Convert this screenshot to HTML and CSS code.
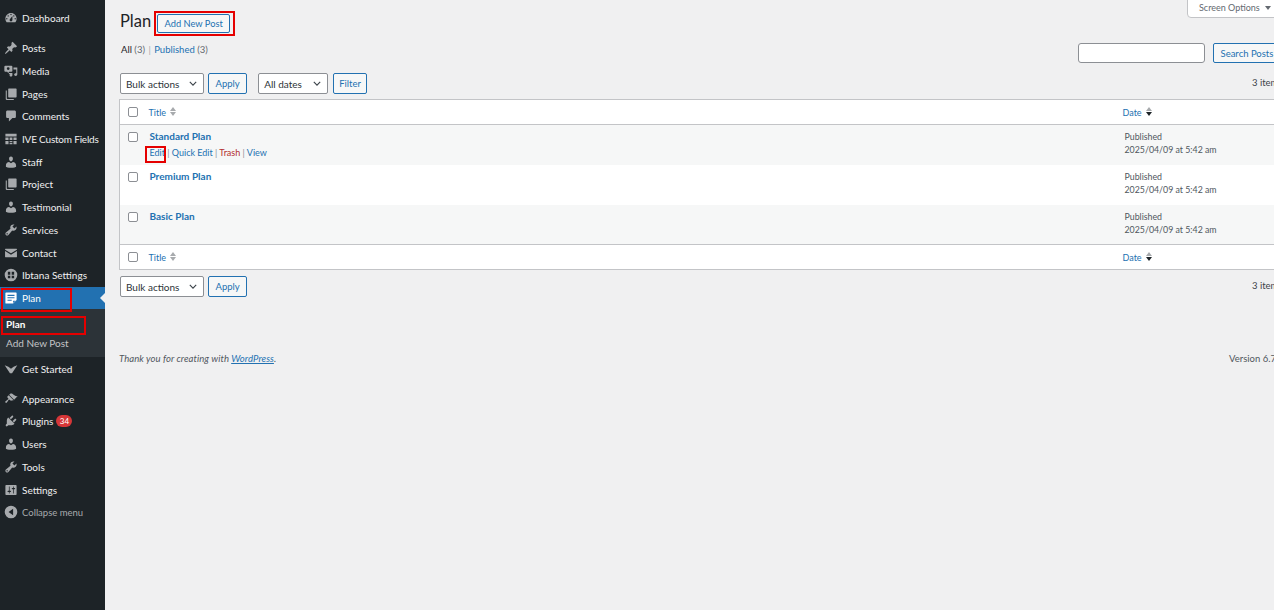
FILE: index.html
```html
<!DOCTYPE html>
<html lang="en">
<head>
  <meta charset="UTF-8">
  <title>Plan</title>
  <link rel="stylesheet" href="styles.css">
</head>
<body>
  <svg class="sprite" width="0" height="0">
    <symbol id="i-dash" viewBox="0 0 20 20"><path fill-rule="evenodd" d="M3.76 16h12.48c1.1-1.37 1.76-3.11 1.76-5 0-4.42-3.58-8-8-8s-8 3.58-8 8c0 1.89.66 3.63 1.76 5zM10 4c.55 0 1 .45 1 1s-.45 1-1 1-1-.45-1-1 .45-1 1-1zM6 6c.55 0 1 .45 1 1s-.45 1-1 1-1-.45-1-1 .45-1 1-1zm8 0c.55 0 1 .45 1 1s-.45 1-1 1-1-.45-1-1 .45-1 1-1zm-5.37 5.55L12 7v6c0 1.1-.9 2-2 2s-2-.9-2-2c0-.57.24-1.08.63-1.45zM4 10c.55 0 1 .45 1 1s-.45 1-1 1-1-.45-1-1 .45-1 1-1zm12 0c.55 0 1 .45 1 1s-.45 1-1 1-1-.45-1-1 .45-1 1-1z"/></symbol>
    <symbol id="i-pin" viewBox="0 0 20 20"><path d="M10.44 3.02l1.82-1.82 6.36 6.35-1.83 1.82c-1.05-.68-2.48-.57-3.41.36l-.75.75c-.92.93-1.04 2.35-.35 3.41l-1.83 1.82-2.41-2.41-2.8 2.79c-.42.42-3.38 2.71-3.8 2.29s1.86-3.39 2.28-3.81l2.79-2.79L4.1 9.36l1.83-1.82c1.05.69 2.48.57 3.4-.36l.75-.75c.93-.92 1.05-2.35.36-3.41z"/></symbol>
    <symbol id="i-media" viewBox="0 0 20 20"><path fill-rule="evenodd" d="M2 2.5h8.5A1.5 1.5 0 0 1 12 4v5.5a1.5 1.5 0 0 1-1.5 1.5H7.5l-1.5 2-1.5-2H2A1.5 1.5 0 0 1 .5 9.5V4A1.5 1.5 0 0 1 2 2.5zM6 4.5a2 2 0 1 0 0 4 2 2 0 0 0 0-4zM13.5 5H19v9.5c0 1.4-1 2.5-2.3 2.5s-2.2-.8-2.2-1.9 1-1.9 2.2-1.9c.3 0 .5 0 .8.1V8h-4zM7 13h5v3c0 1.2-.9 2-2.1 2S8 17.200 8 16.200c0-1 .8-1.700 2-1.700V14.500H7z"/></symbol>
    <symbol id="i-page" viewBox="0 0 20 20"><path d="M7 2h10a1 1 0 0 1 1 1v11a1 1 0 0 1-1 1H7a1 1 0 0 1-1-1V3a1 1 0 0 1 1-1zM4 5v11a1 1 0 0 0 1 1h9v1.500H4A1.500 1.500 0 0 1 2.500 17V5z"/></symbol>
    <symbol id="i-comment" viewBox="0 0 20 20"><path d="M5 2h10c1.100 0 2 .9 2 2v7c0 1.100-.9 2-2 2h-3l-5 5v-5H5c-1.100 0-2-.9-2-2V4c0-1.100.9-2 2-2z"/></symbol>
    <symbol id="i-grid" viewBox="0 0 20 20"><path fill-rule="evenodd" d="M2 2.500h16v4H2zM2 8h4.500v3.500H2zM8 8h4v3.500H8zM13.500 8H18v3.500h-4.500zM2 13h4.500v4.500H2zM8 13h4v1.800H8zM8 15.800h4v1.700H8zM13.500 13H18v4.500h-4.500z"/></symbol>
    <symbol id="i-user" viewBox="0 0 20 20"><path d="M10 9.250c-2.270 0-2.730-3.440-2.730-3.440C7 4.020 7.820 2 9.970 2c2.160 0 2.980 2.020 2.710 3.810 0 0-.41 3.440-2.680 3.440zm0 2.570L12.720 10c2.390 0 4.520 2.330 4.520 4.530v2.490s-3.650 1.130-7.240 1.130c-3.650 0-7.240-1.130-7.240-1.130v-2.490c0-2.250 1.940-4.480 4.470-4.480z"/></symbol>
    <symbol id="i-wrench" viewBox="0 0 20 20"><path fill-rule="evenodd" d="M16.680 9.770c-1.340 1.340-3.300 1.670-4.950.99l-5.410 6.520c-.99.99-2.590.99-3.580 0s-.99-2.590 0-3.570l6.520-5.420c-.68-1.650-.35-3.610.99-4.950 1.280-1.280 3.120-1.620 4.720-1.060l-2.890 2.890 2.820 2.820 2.860-2.870c.53 1.580.18 3.390-1.080 4.650zM3.810 16.210c.4.39 1.040.39 1.430 0 .4-.4.4-1.040 0-1.430-.39-.4-1.030-.4-1.430 0-.39.39-.39 1.030 0 1.430z"/></symbol>
    <symbol id="i-mail" viewBox="0 0 20 20"><path d="M2 4h16a.5.500 0 0 1 .5.500v.8L10 10.500 1.500 5.300v-.8A.5.500 0 0 1 2 4zM1.500 7.200 10 12.500l8.500-5.300v8.300a.5.500 0 0 1-.5.500H2a.5.500 0 0 1-.5-.5z"/></symbol>
    <symbol id="i-globe" viewBox="0 0 20 20"><path fill-rule="evenodd" d="M10 1a9 9 0 1 1 0 18 9 9 0 0 1 0-18zM5.500 5.500v4h3.500v-4zM11 5.500v4h3.500v-4zM5.500 11v3.500h3.500V11zM11 11v3.500h3.500V11z"/></symbol>
    <symbol id="i-plan" viewBox="0 0 20 20"><path fill-rule="evenodd" d="M3 2h14a1 1 0 0 1 1 1v10l-5 5H3a1 1 0 0 1-1-1V3a1 1 0 0 1 1-1zM5 5.500V7h10V5.500zM5 9v1.500h10V9zM5 12.500V14h6v-1.500zM13 14v3l3.500-3z"/></symbol>
    <symbol id="i-start" viewBox="0 0 20 20"><path d="M1 4.500Q7 6.500 10 9.500 13 6.500 19 4.500L11.500 16h-3z"/></symbol>
    <symbol id="i-brush" viewBox="0 0 20 20"><path d="M14.480 11.060L7.410 3.990l1.500-1.500c.5-.56 2.300-.47 3.510.32 1.210.8 1.430 1.280 2.910 2.100 1.180.64 2.450 1.260 4.230.91zm-.71.710L6.700 4.700 4.930 6.470c-.39.39-.39 1.020 0 1.410l1.060 1.060c.39.39.39 1.030 0 1.420-.6.600-1.430 1.150-2.250 1.700-1.410.96-2.800 1.890-1.640 3.060 1.170 1.170 2.100-.22 3.060-1.630.55-.82 1.100-1.650 1.700-2.250.39-.39 1.030-.39 1.420 0l1.060 1.060c.39.39 1.020.39 1.410 0z"/></symbol>
    <symbol id="i-plug" viewBox="0 0 20 20"><path d="M13.110 4.360L9.870 7.600 8 5.730l3.240-3.240c.35-.34 1.050-.2 1.560.32.52.51.66 1.210.31 1.550zm-8 1.770l.91-1.120 9.010 9.010-1.190.84c-.71.71-2.630 1.160-3.820 1.160H6.140L4.900 17.260c-.59.59-1.540.59-2.120 0-.59-.58-.59-1.530 0-2.120l1.240-1.240v-3.880c0-1.130.4-3.190 1.090-3.890zm7.260 3.970l3.240-3.240c.34-.35 1.040-.21 1.550.31.52.51.66 1.210.31 1.550l-3.240 3.250z"/></symbol>
    <symbol id="i-settings" viewBox="0 0 20 20"><path fill-rule="evenodd" d="M18 16V4c0-.55-.45-1-1-1H3c-.55 0-1 .45-1 1v12c0 .55.45 1 1 1h14c.55 0 1-.45 1-1zM8 11h1c.55 0 1 .45 1 1s-.45 1-1 1H8v1.500c0 .28-.22.5-.5.5s-.5-.22-.5-.5V13H6c-.55 0-1-.45-1-1s.45-1 1-1h1V5.500c0-.28.22-.5.5-.5s.5.22.500.500zm5-2h-1c-.55 0-1-.45-1-1s.45-1 1-1h1V5.500c0-.28.22-.5.5-.5s.5.22.5.500V7h1c.55 0 1 .45 1 1s-.45 1-1 1h-1v5.500c0 .28-.22.5-.5.5s-.5-.22-.5-.5z"/></symbol>
    <symbol id="i-collapse" viewBox="0 0 20 20"><path fill-rule="evenodd" d="M10 1a9 9 0 1 1 0 18 9 9 0 0 1 0-18zM13 5.500 6.500 10l6.500 4.500z"/></symbol>
  </svg>

  <div class="screen">
    <nav class="sidebar">
      <a class="item"><svg class="ic"><use href="#i-dash"/></svg>Dashboard</a>
      <div class="gap"></div>
      <a class="item"><svg class="ic"><use href="#i-pin"/></svg>Posts</a>
      <a class="item"><svg class="ic"><use href="#i-media"/></svg>Media</a>
      <a class="item"><svg class="ic"><use href="#i-page"/></svg>Pages</a>
      <a class="item"><svg class="ic"><use href="#i-comment"/></svg>Comments</a>
      <a class="item tight"><svg class="ic"><use href="#i-grid"/></svg>IVE Custom Fields</a>
      <a class="item"><svg class="ic"><use href="#i-user"/></svg>Staff</a>
      <a class="item"><svg class="ic"><use href="#i-page"/></svg>Project</a>
      <a class="item"><svg class="ic"><use href="#i-user"/></svg>Testimonial</a>
      <a class="item"><svg class="ic"><use href="#i-wrench"/></svg>Services</a>
      <a class="item"><svg class="ic"><use href="#i-mail"/></svg>Contact</a>
      <a class="item"><svg class="ic"><use href="#i-globe"/></svg>Ibtana Settings</a>
      <a class="item current"><svg class="ic"><use href="#i-plan"/></svg>Plan</a>
      <div class="submenu">
        <a class="sub active">Plan</a>
        <a class="sub">Add New Post</a>
      </div>
      <a class="item"><svg class="ic"><use href="#i-start"/></svg>Get Started</a>
      <div class="gap"></div>
      <a class="item"><svg class="ic"><use href="#i-brush"/></svg>Appearance</a>
      <a class="item"><svg class="ic"><use href="#i-plug"/></svg>Plugins <span class="badge">34</span></a>
      <a class="item"><svg class="ic"><use href="#i-user"/></svg>Users</a>
      <a class="item"><svg class="ic"><use href="#i-wrench"/></svg>Tools</a>
      <a class="item"><svg class="ic"><use href="#i-settings"/></svg>Settings</a>
      <a class="item collapse"><svg class="ic"><use href="#i-collapse"/></svg>Collapse menu</a>
    </nav>

    <main class="content">
      <div class="screen-options">Screen Options <span class="caret"></span></div>

      <div class="title-row">
        <h1>Plan</h1>
        <a class="btn add-new">Add New Post</a>
      </div>

      <div class="views-row">
        <div class="views"><b>All</b> <span class="count">(3)</span> <span class="sep">|</span> <a>Published</a> <span class="count">(3)</span></div>
        <div class="search">
          <input class="search-input" type="text">
          <a class="btn">Search Posts</a>
        </div>
      </div>

      <div class="tablenav nav-top">
        <div class="select w-bulk">Bulk actions<svg class="chev" viewBox="0 0 10 6"><path d="M1 1l4 4 4-4"/></svg></div>
        <a class="btn">Apply</a>
        <div class="select w-dates">All dates<svg class="chev" viewBox="0 0 10 6"><path d="M1 1l4 4 4-4"/></svg></div>
        <a class="btn btn-filter">Filter</a>
        <span class="items">3 items</span>
      </div>

      <table class="posts">
        <thead>
          <tr>
            <td class="col-check"><span class="check"></span></td>
            <td class="col-title"><a>Title</a><span class="sort"><i class="up"></i><i class="down"></i></span></td>
            <td class="col-date"><a>Date</a><span class="sort dark"><i class="up"></i><i class="down"></i></span></td>
          </tr>
        </thead>
        <tbody>
          <tr class="alt">
            <td class="col-check"><span class="check"></span></td>
            <td class="col-title">
              <a class="post-name">Standard Plan</a>
              <div class="row-actions"><a>Edit</a> | <a>Quick Edit</a> | <a class="trash">Trash</a> | <a>View</a></div>
            </td>
            <td class="col-date">Published<br>2025/04/09 at 5:42 am</td>
          </tr>
          <tr>
            <td class="col-check"><span class="check"></span></td>
            <td class="col-title"><a class="post-name">Premium Plan</a></td>
            <td class="col-date">Published<br>2025/04/09 at 5:42 am</td>
          </tr>
          <tr class="alt">
            <td class="col-check"><span class="check"></span></td>
            <td class="col-title"><a class="post-name">Basic Plan</a></td>
            <td class="col-date">Published<br>2025/04/09 at 5:42 am</td>
          </tr>
        </tbody>
        <tfoot>
          <tr>
            <td class="col-check"><span class="check"></span></td>
            <td class="col-title"><a>Title</a><span class="sort"><i class="up"></i><i class="down"></i></span></td>
            <td class="col-date"><a>Date</a><span class="sort dark"><i class="up"></i><i class="down"></i></span></td>
          </tr>
        </tfoot>
      </table>

      <div class="tablenav nav-bottom">
        <div class="select w-bulk">Bulk actions<svg class="chev" viewBox="0 0 10 6"><path d="M1 1l4 4 4-4"/></svg></div>
        <a class="btn">Apply</a>
        <span class="items">3 items</span>
      </div>

      <div class="footer">
        <em>Thank you for creating with <a>WordPress</a>.</em>
        <span class="version">Version 6.7.2</span>
      </div>
    </main>

    <!-- red annotation boxes from the tutorial screenshot -->
    <span class="mark mark-add"></span>
    <span class="mark mark-edit"></span>
    <span class="mark mark-plan"></span>
    <span class="mark mark-sub"></span>
  </div>
</body>
</html>
```

FILE: styles.css
```css
* {
  box-sizing: border-box;
}

html, body {
  margin: 0;
  height: 100%;
  overflow: hidden;
}

body {
  font-family: Lato, "Open Sans", sans-serif;
  font-size: 10px;
  color: #3c434a;
  background: #f0f0f1;
}

a {
  color: #2271b1;
}

.sprite {
  position: absolute;
}

.screen {
  position: relative;
  display: flex;
  width: 1274px;
  height: 610px;
  overflow: hidden;
}

/* sidebar */
.sidebar {
  flex: 0 0 105px;
  padding-top: 6.700px;
  background: #1d2327;
  color: #f0f0f1;
}

.item {
  display: flex;
  align-items: center;
  height: 22.730px;
  padding-left: 4px;
  color: #f0f0f1;
  white-space: nowrap;
  font-size: 10px;
}

.item.tight {
  letter-spacing: -0.2px;
}

.ic {
  flex: none;
  width: 14px;
  height: 14px;
  margin-right: 4px;
  fill: #a7aaad;
}

.gap {
  height: 7.300px;
}

.item.current {
  position: relative;
  background: #2271b1;
  color: #fff;
}

.item.current .ic {
  fill: #fff;
}

.item.current::after {
  content: "";
  position: absolute;
  right: 0;
  top: 6px;
  border: 5.500px solid transparent;
  border-right-color: #f0f0f1;
  border-left-width: 0;
}

.submenu {
  height: 48px;
  padding-top: 5px;
  background: #2c3338;
}

.sub {
  display: flex;
  align-items: center;
  height: 19px;
  padding-left: 6px;
  color: #c3c4c7;
}

.sub.active {
  color: #fff;
  font-weight: 700;
}

.badge {
  display: inline-block;
  min-width: 16px;
  height: 12px;
  margin-left: 3px;
  border-radius: 6px;
  background: #d63638;
  color: #fff;
  font-size: 8px;
  line-height: 12px;
  text-align: center;
}

.collapse {
  color: #a7aaad;
  font-size: 9.500px;
}

/* main */
.content {
  position: relative;
  flex: none;
  width: 1190px;
  padding: 0 0 0 14px;
}

.screen-options {
  position: absolute;
  top: -2px;
  left: 1082px;
  width: 94px;
  height: 20px;
  padding: 2px 0 0 11px;
  background: #fff;
  border: 1px solid #c3c4c7;
  border-radius: 0 0 4px 4px;
  color: #646970;
  font-size: 9px;
  line-height: 14px;
}

.caret {
  display: inline-block;
  margin-left: 3px;
  border: 3px solid transparent;
  border-top: 4px solid #646970;
  border-bottom: 0;
  vertical-align: 1px;
}

.title-row {
  display: flex;
  align-items: center;
  height: 31px;
  padding-top: 11px;
}

h1 {
  margin: 0 6px 0 1px;
  font-size: 16.500px;
  font-weight: 400;
  color: #1d2327;
}

.btn {
  display: inline-flex;
  align-items: center;
  height: 21px;
  padding: 0 6.500px;
  border: 1px solid #2271b1;
  border-radius: 2px;
  background: #f6f7f7;
  color: #2271b1;
  font-size: 9.500px;
  white-space: nowrap;
}

.add-new {
  width: 73px;
  height: 19px;
  margin-top: 5px;
  justify-content: center;
  padding: 0;
  font-size: 9.300px;
}

.btn-filter {
  margin-left: 1px;
  padding: 0 5px;
}

.views-row {
  display: flex;
  justify-content: space-between;
  height: 31px;
  margin-top: 7px;
  width: 1164px;
}

.views {
  padding: 6px 0 0 2px;
  color: #646970;
  font-size: 9.500px;
}

.views b {
  color: #1d2327;
  font-weight: 400;
}

.sep {
  color: #a7aaad;
  margin: 0 1px;
}

.search {
  display: flex;
  gap: 8px;
  padding-top: 5px;
}

.search-input {
  width: 127px;
  height: 20px;
  border: 1px solid #8c8f94;
  border-radius: 3px;
  background: #fff;
}

.search .btn {
  width: 70px;
  height: 20px;
  flex: none;
}

.tablenav {
  position: relative;
  display: flex;
  align-items: center;
  gap: 4px;
  width: 1190px;
  padding-left: 1px;
}

.nav-top {
  height: 21px;
  margin-top: 4px;
}

.nav-bottom {
  height: 21px;
  margin-top: 6px;
}

.select {
  display: flex;
  align-items: center;
  justify-content: space-between;
  height: 21px;
  padding: 0 6px 0 5px;
  background: #fff;
  border: 1px solid #8c8f94;
  border-radius: 2px;
  color: #2c3338;
  font-size: 10px;
}

.w-bulk {
  width: 84px;
}

.w-dates {
  width: 70px;
  margin-left: 7px;
}

.chev {
  width: 8px;
  height: 5px;
  fill: none;
  stroke: #3c434a;
  stroke-width: 1.400;
}

.items {
  position: absolute;
  left: 1133px;
  top: 4px;
  font-size: 9.500px;
  color: #3c434a;
  white-space: nowrap;
}

/* table */
.posts {
  width: 1190px;
  margin-top: 5px;
  border: 1px solid #c3c4c7;
  border-collapse: collapse;
  background: #fff;
  table-layout: fixed;
  font-size: 9px;
}

.posts td {
  padding: 0;
  vertical-align: top;
}

.posts thead tr,
.posts tfoot tr {
  height: 25px;
}

.posts thead td {
  border-bottom: 1px solid #c3c4c7;
}

.posts tfoot td {
  border-top: 1px solid #c3c4c7;
}

.posts thead td,
.posts tfoot td {
  vertical-align: middle;
}

.posts tbody tr {
  height: 40px;
}

.alt {
  background: #f6f7f7;
}

.col-check {
  width: 29px;
  padding-left: 8px !important;
}

.col-title {
  width: 974px;
}

.col-date {
  line-height: 13px;
  color: #50575e;
}

tbody .col-check {
  padding-top: 7px !important;
}

tbody .col-date {
  padding: 5px 0 0 2px !important;
  font-size: 8.800px;
}

tbody .col-title {
  padding-top: 5px !important;
}

.check {
  display: block;
  width: 10px;
  height: 10px;
  background: #fff;
  border: 1px solid #8c8f94;
  border-radius: 2px;
}

.post-name {
  display: block;
  padding-left: 1px;
  font-weight: 700;
  font-size: 10px;
  line-height: 13px;
}

.row-actions {
  margin-top: 3px;
  padding-left: 1px;
  font-size: 9px;
  line-height: 13px;
  color: #8c8f94;
}

.trash {
  color: #b32d2e;
}

.sort {
  display: inline-block;
  width: 7px;
  margin-left: 4px;
}

.sort i {
  display: block;
  border: 3px solid transparent;
  border-left-width: 3.500px;
  border-right-width: 3.500px;
  height: 0;
  width: 0;
}

.sort .up {
  border-top: 0;
  border-bottom: 4px solid #a7aaad;
  margin-bottom: 1px;
}

.sort .down {
  border-bottom: 0;
  border-top: 4px solid #a7aaad;
}

.sort.dark .down {
  border-top-color: #1d2327;
}

/* footer */
.footer {
  position: relative;
  margin-top: 56px;
  width: 1190px;
  font-size: 9.500px;
  letter-spacing: 0.08px;
  color: #50575e;
}

.footer a {
  text-decoration: underline;
}

.version {
  position: absolute;
  left: 1110px;
  top: 0;
  white-space: nowrap;
  letter-spacing: 0;
}

/* annotations */
.mark {
  position: absolute;
  border: 2px solid #e50000;
}

.mark-add {
  left: 154px;
  top: 11px;
  width: 81px;
  height: 25px;
}

.mark-edit {
  left: 145px;
  top: 146px;
  width: 21px;
  height: 17px;
}

.mark-plan {
  left: 1px;
  top: 288px;
  width: 71px;
  height: 24px;
}

.mark-sub {
  left: 1px;
  top: 316px;
  width: 85px;
  height: 19px;
}
```
